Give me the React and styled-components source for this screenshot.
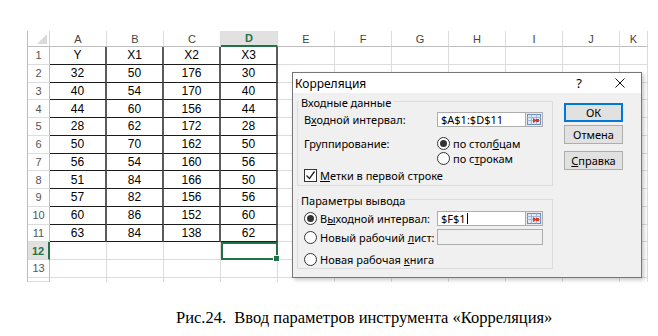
import React from 'react'
import styled, { createGlobalStyle, css } from 'styled-components'

const GlobalStyle = createGlobalStyle`
  html, body {
    margin: 0;
    padding: 0;
    background: #fff;
  }
`

const Page = styled.div`
  position: relative;
  width: 658px;
  height: 336px;
  background: #fff;
  overflow: hidden;
`

/* ---------- spreadsheet ---------- */

const Sheet = styled.div`
  display: grid;
  grid-template-columns: 22px repeat(10, 57px) 28px;
  grid-template-rows: 16px repeat(13, 17.75px) 4px;
  width: 620px;
  margin: 31px 0 0 27px;
  border-left: 1px solid #bdbdbd;
  font-family: "Liberation Sans", Arial, sans-serif;
  font-size: 12px;
  color: #000;
`

const Corner = styled.div`
  display: flex;
  align-items: flex-end;
  justify-content: flex-end;
  padding: 0 2px 2px 0;
  border-right: 1px solid #d4d4d4;
  border-bottom: 1px solid #bdbdbd;
`

const CornerMark = styled.div`
  width: 0;
  height: 0;
  border-left: 10px solid transparent;
  border-bottom: 10px solid #dadada;
`

const ColHead = styled.div`
  box-sizing: border-box;
  display: flex;
  align-items: center;
  justify-content: center;
  color: #444;
  font-size: 11px;
  border-right: 1px solid #dcdcdc;
  border-bottom: 1px solid #bdbdbd;
  ${p => p.$active && css`
    background: #e1e1e1;
    color: #217346;
    font-weight: bold;
    border-bottom: 2px solid #217346;
  `}
`

const RowHead = styled.div`
  box-sizing: border-box;
  display: flex;
  align-items: center;
  justify-content: center;
  color: #555;
  font-size: 11px;
  border-right: 1px solid #bdbdbd;
  border-bottom: 1px solid #dcdcdc;
  ${p => p.$active && css`
    background: #e1e1e1;
    color: #217346;
    font-weight: bold;
    border-right: 2px solid #217346;
  `}
`

const Cell = styled.div`
  box-sizing: border-box;
  display: flex;
  align-items: center;
  justify-content: center;
  border-right: 1px solid #dcdcdc;
  border-bottom: 1px solid #dcdcdc;
  ${p => p.$table && css`
    border-right: 2px solid #5c5c5c;
    border-bottom: 1px solid #1c1c1c;
  `}
  ${p => p.$selected && css`
    position: relative;
    border: 2px solid #217346;
  `}
  ${p => p.$stub && css`
    border-bottom: none;
  `}
`

const FillHandle = styled.div`
  position: absolute;
  right: -4px;
  bottom: -4px;
  width: 5px;
  height: 5px;
  background: #217346;
  border: 1px solid #fff;
`

/* ---------- dialog ---------- */

const Dialog = styled.div`
  position: absolute;
  left: 292px;
  top: 72px;
  width: 350px;
  height: 206px;
  box-sizing: border-box;
  display: flex;
  flex-direction: column;
  border: 1px solid #777;
  box-shadow: 2px 2px 4px rgba(0, 0, 0, 0.22);
  font-family: "Noto Sans", "Open Sans", sans-serif;
  font-size: 11px;
  color: #000;
`

const TitleBar = styled.div`
  display: flex;
  align-items: center;
  height: 20px;
  background: #fff;
  padding-left: 2px;
  font-size: 12px;
`

const Title = styled.div`
  flex: 1;
`

const TitleButton = styled.div`
  display: flex;
  align-items: center;
  justify-content: center;
  width: ${p => p.$w}px;
  height: 100%;
  font-size: 13px;
`

const Body = styled.div`
  flex: 1;
  display: flex;
  background: #f0f0f0;
  padding-left: 4px;
`

const LeftCol = styled.div`
  display: flex;
  flex-direction: column;
  width: 256px;
`

const Group = styled.fieldset`
  margin: ${p => p.$mt || 0}px 0 0 0;
  padding: 0 0 ${p => p.$pb}px 6px;
  border: 1px solid #dcdcdc;
  min-width: 0;
`

const Legend = styled.legend`
  margin-left: -5px;
  padding: 3px 2px 0;
  line-height: 14px;
`

const Row = styled.div`
  display: flex;
  align-items: center;
  height: ${p => p.$h}px;
  margin-top: ${p => p.$mt || 0}px;
`

const Label = styled.div`
  display: flex;
  align-items: center;
  gap: 3px;
  width: ${p => p.$w || 133}px;
  flex-shrink: 0;
  white-space: nowrap;
`

const U = styled.span`
  text-decoration: underline;
  text-underline-offset: 1px;
`

const RefBox = styled.div`
  display: flex;
  height: ${p => p.$h}px;
`

const TextBox = styled.div`
  box-sizing: border-box;
  display: flex;
  align-items: center;
  width: ${p => p.$w}px;
  height: 100%;
  padding-left: 3px;
  background: ${p => (p.$disabled ? '#f0f0f0' : '#fff')};
  border: 1px solid #adadad;
  ${p => p.$joined && css`border-right: none;`}
`

const Caret = styled.span`
  display: inline-block;
  width: 1px;
  height: 11px;
  margin-left: 1px;
  background: #000;
`

const PickButton = styled.div`
  box-sizing: border-box;
  display: flex;
  align-items: center;
  justify-content: center;
  width: 18px;
  height: 100%;
  background: #e9e9e9;
  border: 1px solid #adadad;
`

const Choice = styled.div`
  display: flex;
  align-items: center;
  gap: 3px;
  white-space: nowrap;
`

const RadioDot = styled.div`
  box-sizing: border-box;
  display: flex;
  align-items: center;
  justify-content: center;
  width: 13px;
  height: 13px;
  border: 1px solid #333;
  border-radius: 50%;
  background: #fff;
  flex-shrink: 0;

  &::after {
    content: '';
    display: ${p => (p.$on ? 'block' : 'none')};
    width: 7px;
    height: 7px;
    border-radius: 50%;
    background: #333;
  }
`

const CheckBox = styled.div`
  box-sizing: border-box;
  display: flex;
  align-items: center;
  justify-content: center;
  width: 13px;
  height: 13px;
  border: 1px solid #333;
  background: #fff;
  flex-shrink: 0;
`

const ButtonCol = styled.div`
  display: flex;
  flex-direction: column;
  margin: 10px 0 0 11px;
`

const Button = styled.div`
  box-sizing: border-box;
  display: flex;
  align-items: center;
  justify-content: center;
  width: 59px;
  height: 19px;
  margin-top: ${p => p.$mt || 0}px;
  background: #e1e1e1;
  border: 1px solid #adadad;
  ${p => p.$default && css`
    border: 1px solid #0078d7;
    box-shadow: inset 0 0 0 1px #0078d7;
  `}
`

/* ---------- caption ---------- */

const Caption = styled.p`
  margin: 26px 0 0;
  padding-left: 176px;
  font-family: "Liberation Serif", "Times New Roman", serif;
  font-size: 16.5px;
  line-height: 20px;
  white-space: pre;
  color: #000;
`

const RangeIcon = () => (
  <svg width="14" height="11" viewBox="0 0 14 11">
    <rect x="0.5" y="0.5" width="13" height="10" fill="#dfe9f5" stroke="#6d8fbf" />
    <path d="M0.5 3.5h13M0.5 6.5h13M4.5 0.5v10M9.5 0.5v10" stroke="#9fb7d8" />
    <path d="M6 4l4 2.5-4 2.5z" fill="#d8372a" />
    <rect x="9" y="5" width="3" height="3" fill="#d8372a" />
  </svg>
)

const CloseIcon = () => (
  <svg width="10" height="10" viewBox="0 0 10 10">
    <path d="M0.5 0.5l9 9M9.5 0.5l-9 9" stroke="#111" strokeWidth="1" />
  </svg>
)

const CheckMark = () => (
  <svg width="11" height="11" viewBox="0 0 11 11">
    <path d="M1.5 5.5l3 3 5-7" fill="none" stroke="#222" strokeWidth="1.3" />
  </svg>
)

const letters = ['A', 'B', 'C', 'D', 'E', 'F', 'G', 'H', 'I', 'J', 'K']

const data = [
  ['Y', 'X1', 'X2', 'X3'],
  [32, 50, 176, 30],
  [40, 54, 170, 40],
  [44, 60, 156, 44],
  [28, 62, 172, 28],
  [50, 70, 162, 50],
  [56, 54, 160, 56],
  [51, 84, 166, 50],
  [57, 82, 156, 56],
  [60, 86, 152, 60],
  [63, 84, 138, 62],
]

const Spreadsheet = () => {
  const rows = []
  for (let r = 1; r <= 13; r++) {
    rows.push(<RowHead key={'h' + r} $active={r === 12}>{r}</RowHead>)
    letters.forEach((l, c) => {
      const inTable = r <= 11 && c < 4
      const selected = r === 12 && c === 3
      rows.push(
        <Cell key={l + r} $table={inTable} $selected={selected}>
          {inTable ? data[r - 1][c] : null}
          {selected && <FillHandle />}
        </Cell>
      )
    })
  }

  return (
    <Sheet>
      <Corner><CornerMark /></Corner>
      {letters.map(l => (
        <ColHead key={l} $active={l === 'D'}>{l}</ColHead>
      ))}
      {rows}
      <RowHead />
      {letters.map(l => <Cell key={'s' + l} $stub />)}
    </Sheet>
  )
}

const CorrelationDialog = () => (
  <Dialog>
    <TitleBar>
      <Title>Корреляция</Title>
      <TitleButton $w={40}>?</TitleButton>
      <TitleButton $w={42}><CloseIcon /></TitleButton>
    </TitleBar>
    <Body>
      <LeftCol>
        <Group $pb={3}>
          <Legend>Входные данные</Legend>
          <Row $h={18}>
            <Label><span>В<U>х</U>одной интервал:</span></Label>
            <RefBox $h={15}>
              <TextBox $w={88} $joined>$A$1:$D$11</TextBox>
              <PickButton><RangeIcon /></PickButton>
            </RefBox>
          </Row>
          <Row $h={16} $mt={7}>
            <Label><span>Группирование:</span></Label>
            <Choice><RadioDot $on /><span>по стол<U>б</U>цам</span></Choice>
          </Row>
          <Row $h={14}>
            <Label />
            <Choice><RadioDot /><span>по с<U>т</U>рокам</span></Choice>
          </Row>
          <Row $h={14} $mt={3}>
            <Choice>
              <CheckBox><CheckMark /></CheckBox>
              <span><U>М</U>етки в первой строке</span>
            </Choice>
          </Row>
        </Group>
        <Group $mt={5} $pb={1}>
          <Legend>Параметры вывода</Legend>
          <Row $h={17} $mt={2}>
            <Label><RadioDot $on /><span>В<U>ы</U>ходной интервал:</span></Label>
            <RefBox $h={15}>
              <TextBox $w={88} $joined>$F$1<Caret /></TextBox>
              <PickButton><RangeIcon /></PickButton>
            </RefBox>
          </Row>
          <Row $h={16} $mt={2}>
            <Label><RadioDot /><span>Новый рабочий <U>л</U>ист:</span></Label>
            <RefBox $h={16}>
              <TextBox $w={106} $disabled />
            </RefBox>
          </Row>
          <Row $h={16} $mt={6}>
            <Label><RadioDot /><span>Новая рабочая <U>к</U>нига</span></Label>
          </Row>
        </Group>
      </LeftCol>
      <ButtonCol>
        <Button $default>ОК</Button>
        <Button $mt={3}>Отмена</Button>
        <Button $mt={7}><span><U>С</U>правка</span></Button>
      </ButtonCol>
    </Body>
  </Dialog>
)

const App = () => (
  <Page>
    <GlobalStyle />
    <Spreadsheet />
    <CorrelationDialog />
    <Caption>Рис.24.  Ввод параметров инструмента «Корреляция»</Caption>
  </Page>
)

export default App
